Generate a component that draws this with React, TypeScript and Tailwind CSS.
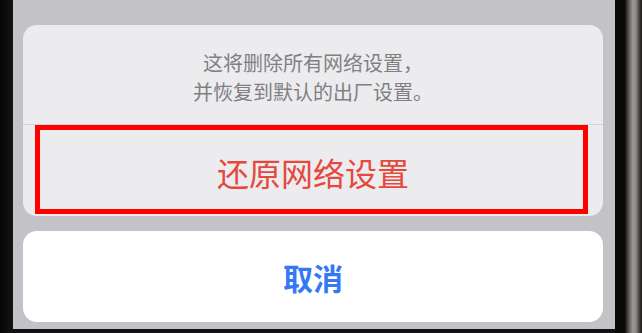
import React from "react";

export default function App() {
  const font = { fontFamily: '"Noto Sans CJK SC", "Noto Sans", sans-serif' };
  return (
    <div className="flex h-[333px] w-[642px] overflow-hidden bg-[#0b0a09]" style={font}>
      <div className="h-full w-[13px] bg-[linear-gradient(to_right,#050505,#121412)]" />
      <div className="flex h-full w-[602px] flex-col border-b-4 border-[#111111] bg-[#c3c3c7] pb-[7px] pl-[10px] pr-[12px] pt-[25px]">
        <div className="relative flex h-[191px] flex-col overflow-hidden rounded-[14px] bg-[#ececee]">
          <div className="flex h-[99px] flex-col items-center justify-center pt-[4px] text-[20px] leading-[29px] text-[#808084]">
            <span>这将删除所有网络设置，</span>
            <span>并恢复到默认的出厂设置。</span>
          </div>
          <div className="h-px bg-[#d6d6d9]" />
          <div className="flex flex-1 items-center justify-center pt-[2px] text-[32px] leading-none text-[#e6483e]">
            还原网络设置
          </div>
          <div className="pointer-events-none absolute left-[12px] top-[100px] h-[89px] w-[553px] border-[5px] border-[#ff0000]" />
        </div>
        <div className="mt-[15px] flex h-[91px] items-center justify-center rounded-[14px] bg-white text-[30px] font-bold leading-none text-[#3478f6]">
          取消
        </div>
      </div>
      <div className="h-full flex-1 bg-[linear-gradient(to_right,#0b0a09_0%,#0b0a09_36%,#4a4846_48%,#9c9a97_66%,#8a8885_78%,#3a3836_92%,#1a1918_100%)]" />
    </div>
  );
}
